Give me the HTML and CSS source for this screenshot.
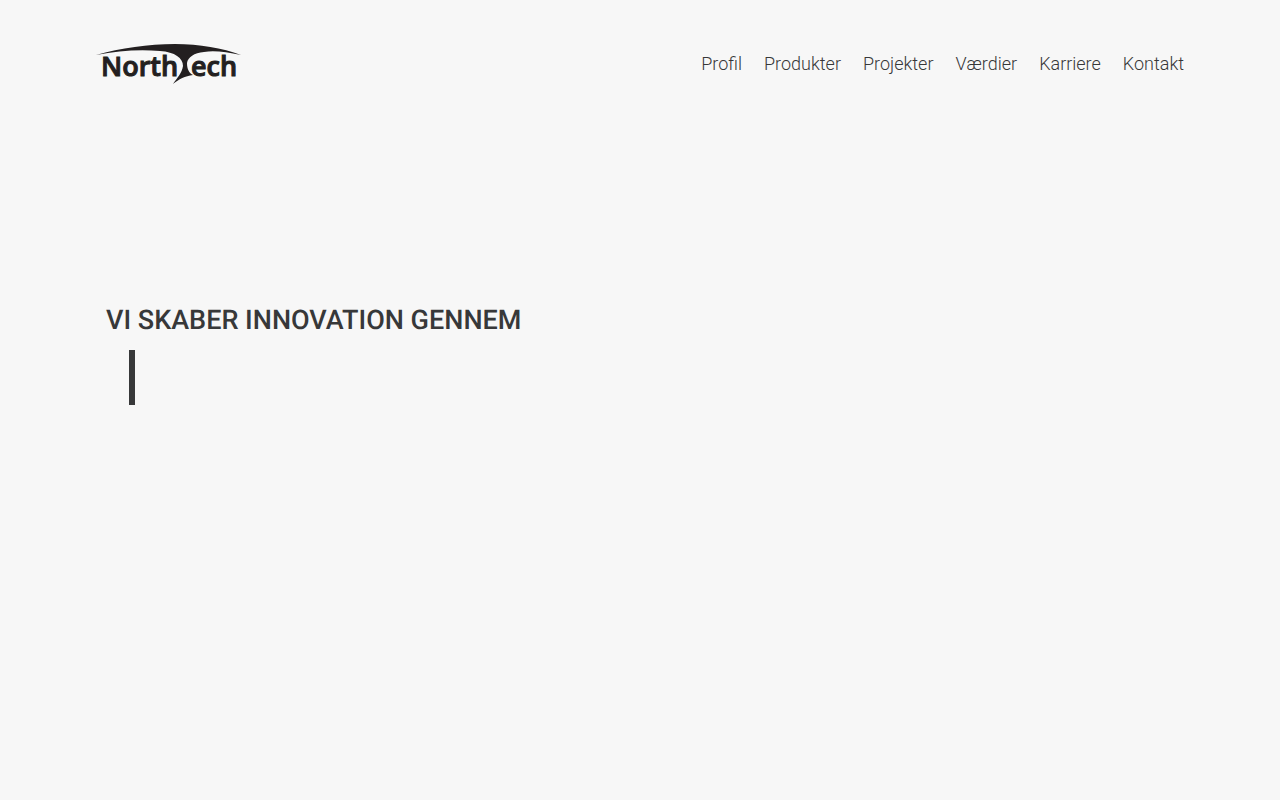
FILE: index.html
```
<!DOCTYPE html>
<html lang="da">

<head>
    <meta charset="UTF-8">
    <meta name="viewport" content="width=device-width, initial-scale=1.0">
    <title>NorthTech</title>
    <link rel="stylesheet" href="styles.css">
</head>

<body>
    <header class="header">
        <a href="#" class="logo" aria-label="NorthTech">
            <svg width="146" height="42" viewBox="0 0 146 42">
                <path d="M0 12 C25 5 52 1 79 1 C104 1 126 5 145 12 C130 9 118 7 108 9 C98 10 92 14 91 20 C91 26 93 30 97 32 C89 33 83 36 77 41 C81 35 86 30 87 23 C87 15 79 9 64 8 C42 6 22 8 0 12 Z" />
                <text x="5" y="33">North</text>
                <text x="95" y="33">ech</text>
            </svg>
        </a>
        <nav class="menu">
            <a href="#profil">Profil</a>
            <a href="#produkter">Produkter</a>
            <a href="#projekter">Projekter</a>
            <a href="#vaerdier">Værdier</a>
            <a href="#karriere">Karriere</a>
            <a href="#kontakt">Kontakt</a>
        </nav>
    </header>
    <main class="hero">
        <h1>VI SKABER INNOVATION GENNEM</h1>
        <div class="typed"><span class="cursor"></span></div>
    </main>
</body>

</html>
```
FILE: styles.css
```
/* General Styles */
body {
    font-family: Roboto, sans-serif;
    margin: 0;
    background: #f7f7f7;
    color: #373839;
}

/* Header */
.header {
    display: flex;
    justify-content: space-between;
    align-items: center;
    height: 128px;
    padding: 0 96px;
}

.logo svg {
    display: block;
    fill: #231f20;
}

.logo text {
    font-family: "Open Sans", sans-serif;
    font-size: 27px;
    font-weight: 600;
    stroke: #231f20;
    stroke-width: 1px;
}

.menu {
    display: flex;
    gap: 22px;
}

.menu a {
    font-size: 18px;
    font-weight: 300;
    line-height: 24px;
    color: #373839;
    text-decoration: none;
}

/* Hero */
.hero {
    padding: 176px 106px 0;
}

.hero h1 {
    margin: 0;
    font-size: 27px;
    font-weight: 500;
    line-height: 32px;
    text-rendering: geometricPrecision;
}

/* Typewriter line */
.typed {
    display: flex;
    padding: 14px 23px;
}

.cursor {
    width: 6px;
    height: 55px;
    background: #373839;
}
```
